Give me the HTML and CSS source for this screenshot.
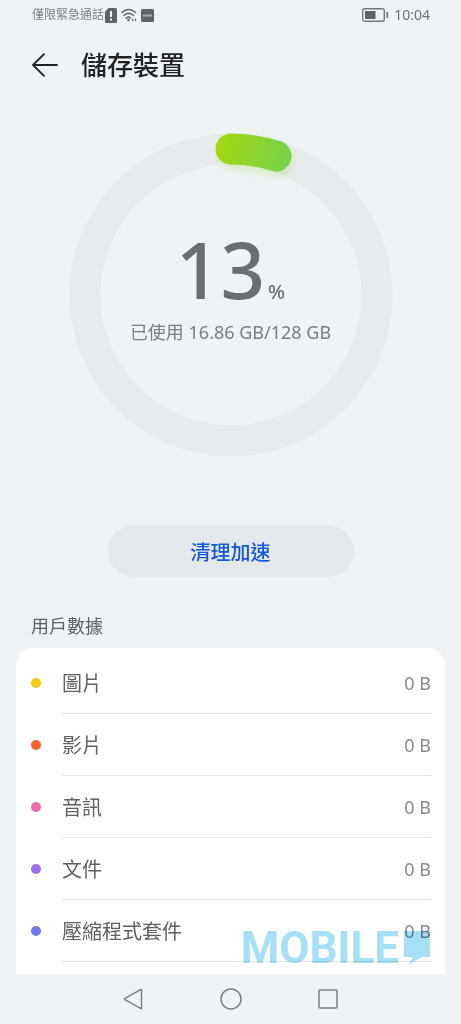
FILE: index.html
```
<!DOCTYPE html>
<html lang="zh-Hant">
<head>
<meta charset="utf-8">
<meta name="viewport" content="width=device-width, initial-scale=1">
<title>儲存裝置</title>
<link rel="stylesheet" href="styles.css">
</head>
<body>
<div class="phone">
  <div class="status-bar">
    <span class="carrier">僅限緊急通話</span>
    <svg class="status-sim" width="12" height="15" viewBox="0 0 12 15" aria-hidden="true"><path d="M3.500 0H10.500Q12 0 12 1.500V13.500Q12 15 10.500 15H1.500Q0 15 0 13.500V3.500Z" fill="#5f6366"/><path d="M6 3V9M6 10.500V12.500" stroke="#eff3f6" stroke-width="2"/></svg>
    <svg class="status-wifi" width="16" height="14" viewBox="0 0 16 14" fill="none" stroke="#5f6366" stroke-width="1.500" stroke-linecap="round" aria-hidden="true"><path d="M1 4.500Q7.500-1.500 14.500 4.500M3 7.500Q7.800 3 12.500 7.500M5.200 10.200Q7.600 8 9.500 10"/><circle cx="7.500" cy="12" r=".6" fill="#5f6366"/><path d="M11.800 11.200V12.500M14.500 11.200V12.500" stroke-width="1.300"/></svg>
    <svg class="status-app" width="13" height="13" viewBox="0 0 13 13" aria-hidden="true"><rect width="13" height="13" rx="1.500" fill="#5f6366"/><path d="M2 6.500H11" stroke="#b9bdc0" stroke-width="1.800" stroke-dasharray="2 .5"/></svg>
    <span class="status-right">
      <svg width="27" height="14" viewBox="0 0 27 14" aria-hidden="true"><rect x=".7" y=".7" width="21.600" height="12.600" rx="2" fill="none" stroke="#74787b" stroke-width="1.400"/><rect x="3" y="3" width="10.500" height="8" fill="#5f6366"/><path d="M25.200 4V10" stroke="#74787b" stroke-width="1.800"/></svg>
      <time class="clock">10:04</time>
    </span>
  </div>

  <main class="content">
    <header class="header">
      <button class="back" type="button" aria-label="返回"><svg width="26" height="24" viewBox="0 0 26 24" fill="none" stroke="#202224" stroke-width="1.800" stroke-linecap="round" stroke-linejoin="round"><path d="M25 12H1M12 1.200L1 12L12 22.800"/></svg></button>
      <h1 class="title">儲存裝置</h1>
    </header>

    <section class="usage">
      <svg class="ring" viewBox="0 0 324 324" aria-hidden="true">
        <defs>
          <linearGradient id="used" gradientUnits="userSpaceOnUse" x1="146" y1="0" x2="224" y2="16"><stop offset="0" stop-color="#a7d70c"/><stop offset="1" stop-color="#74d24b"/></linearGradient>
          <filter id="glow" filterUnits="userSpaceOnUse" x="120" y="-20" width="140" height="90"><feGaussianBlur stdDeviation="5"/></filter>
        </defs>
        <circle cx="162" cy="162" r="146" fill="none" stroke="#e7ebed" stroke-width="31"/>
        <path d="M166 21A146 146 0 0 1 209 28" fill="none" stroke="#a9dc65" stroke-opacity=".4" stroke-width="30" stroke-linecap="round" filter="url(#glow)"/>
        <path d="M162 16A146 146 0 0 1 207 23.100" fill="none" stroke="url(#used)" stroke-width="31" stroke-linecap="round"/>
      </svg>
      <div class="reading">
        <p class="percent"><span class="number">13</span><span class="unit">%</span></p>
        <p class="detail">已使用 16.86 GB/128 GB</p>
      </div>
    </section>

    <button class="clean" type="button">清理加速</button>

    <h2 class="section-title">用戶數據</h2>
    <ul class="card">
      <li class="row"><span class="dot yellow"></span><span class="cell"><span>圖片</span><span class="size">0 B</span></span></li>
      <li class="row"><span class="dot orange"></span><span class="cell"><span>影片</span><span class="size">0 B</span></span></li>
      <li class="row"><span class="dot pink"></span><span class="cell"><span>音訊</span><span class="size">0 B</span></span></li>
      <li class="row"><span class="dot purple"></span><span class="cell"><span>文件</span><span class="size">0 B</span></span></li>
      <li class="row"><span class="dot blue"></span><span class="cell"><span>壓縮程式套件</span><span class="size">0 B</span></span></li>
    </ul>
    <div class="watermark"><span>MOBILE</span><svg width="28" height="36" viewBox="0 0 28 36" aria-hidden="true"><path d="M1 1H27V27H19L5 35L10 27H1Z" fill="#a6e0f7"/></svg></div>
  </main>

  <nav class="nav-bar">
    <button type="button" aria-label="上一頁"><svg width="22" height="22" viewBox="0 0 22 22"><path d="M18.500 1.500V20.500Q18.500 21 18 20.700L2 11.600Q1.300 11 2 10.400L18 1.300Q18.500 1 18.500 1.500Z"/></svg></button>
    <button type="button" aria-label="主畫面"><svg width="22" height="22" viewBox="0 0 22 22"><circle cx="11" cy="11" r="10"/></svg></button>
    <button type="button" aria-label="最近使用"><svg width="22" height="22" viewBox="0 0 22 22"><rect x="2" y="2" width="18" height="18" rx="1"/></svg></button>
  </nav>
</div>
</body>
</html>
```

FILE: styles.css
```
* { box-sizing: border-box; }

body, h1, h2, p, ul { margin: 0; padding: 0; }

body {
  background: #eff3f6;
  color: #5f6163;
  font-family: "Noto Sans", "Noto Sans CJK TC", sans-serif;
}

button {
  border: 0;
  padding: 0;
  background: none;
  font: inherit;
  cursor: pointer;
}

svg { display: block; }

.phone {
  display: flex;
  flex-direction: column;
  height: 100vh;
}

.status-bar {
  display: flex;
  align-items: center;
  gap: 4px;
  height: 30px;
  padding: 0 31px 0 32px;
  flex: none;
}

.carrier {
  font-size: 12px;
  line-height: 16px;
  color: #7b7f82;
  margin-right: -3px;
}

.status-right {
  display: flex;
  align-items: center;
  gap: 5px;
  margin-left: auto;
}

.clock {
  font-size: 14px;
  line-height: 20px;
  color: #707376;
}

.content {
  position: relative;
  flex: 1;
  min-height: 0;
  overflow: hidden;
  display: flex;
  flex-direction: column;
}

.header {
  display: flex;
  align-items: center;
  gap: 23px;
  height: 70px;
  padding: 0 32px;
  flex: none;
}

.title {
  font-size: 26px;
  line-height: 36px;
  font-weight: 500;
  color: #202224;
}

.usage {
  display: grid;
  place-items: center;
  margin-top: 33px;
  flex: none;
}

.ring {
  grid-area: 1 / 1;
  width: 324px;
  overflow: visible;
}

.reading {
  grid-area: 1 / 1;
  padding-bottom: 12px;
  text-align: center;
}

.percent {
  display: flex;
  justify-content: center;
  align-items: baseline;
  gap: 3px;
  color: #6b6e70;
}

.number {
  font-size: 78px;
  line-height: 72px;
  font-weight: 500;
}

.unit {
  font-size: 20px;
  line-height: 24px;
  font-weight: 500;
}

.detail {
  margin-top: 13px;
  font-size: 18px;
  line-height: 28px;
  color: #7b7e80;
}

.clean {
  align-self: center;
  width: 246px;
  height: 52px;
  margin-top: 68px;
  border-radius: 26px;
  background: #e5e8ea;
  color: #1558d6;
  font-size: 20px;
  font-weight: 500;
  flex: none;
}

.section-title {
  margin: 36px 31px 9px;
  font-size: 18px;
  line-height: 26px;
  font-weight: 400;
  color: #5f6163;
}

.card {
  margin: 0 16px;
  padding-top: 4px;
  flex: 1 0 auto;
  list-style: none;
  background: #fff;
  border-radius: 18px 18px 0 0;
}

.row {
  display: flex;
  align-items: center;
  gap: 21px;
  padding: 0 14px 0 15px;
}

.dot {
  width: 10px;
  height: 10px;
  border-radius: 50%;
}

.yellow { background: #f2c80f; }
.orange { background: #f5622d; }
.pink { background: #ee6cae; }
.purple { background: #9c70e6; }
.blue { background: #6f78ee; }

.cell {
  display: flex;
  flex: 1;
  align-items: center;
  justify-content: space-between;
  height: 62px;
  border-bottom: 1px solid #e5e5e5;
  font-size: 20px;
}

.size {
  font-size: 18px;
  color: #8a8a8a;
}

.watermark {
  position: absolute;
  right: 30px;
  bottom: 0;
  display: flex;
  align-items: center;
  gap: 4px;
  color: #a6e0f7;
  font-family: Roboto, sans-serif;
  font-size: 44px;
  line-height: 52px;
  font-weight: 700;
  mix-blend-mode: multiply;
  pointer-events: none;
}

.nav-bar {
  display: flex;
  align-items: center;
  justify-content: center;
  gap: 75px;
  height: 50px;
  flex: none;
}

.nav-bar svg {
  fill: none;
  stroke: #7c7f82;
  stroke-width: 1.5;
}
```
